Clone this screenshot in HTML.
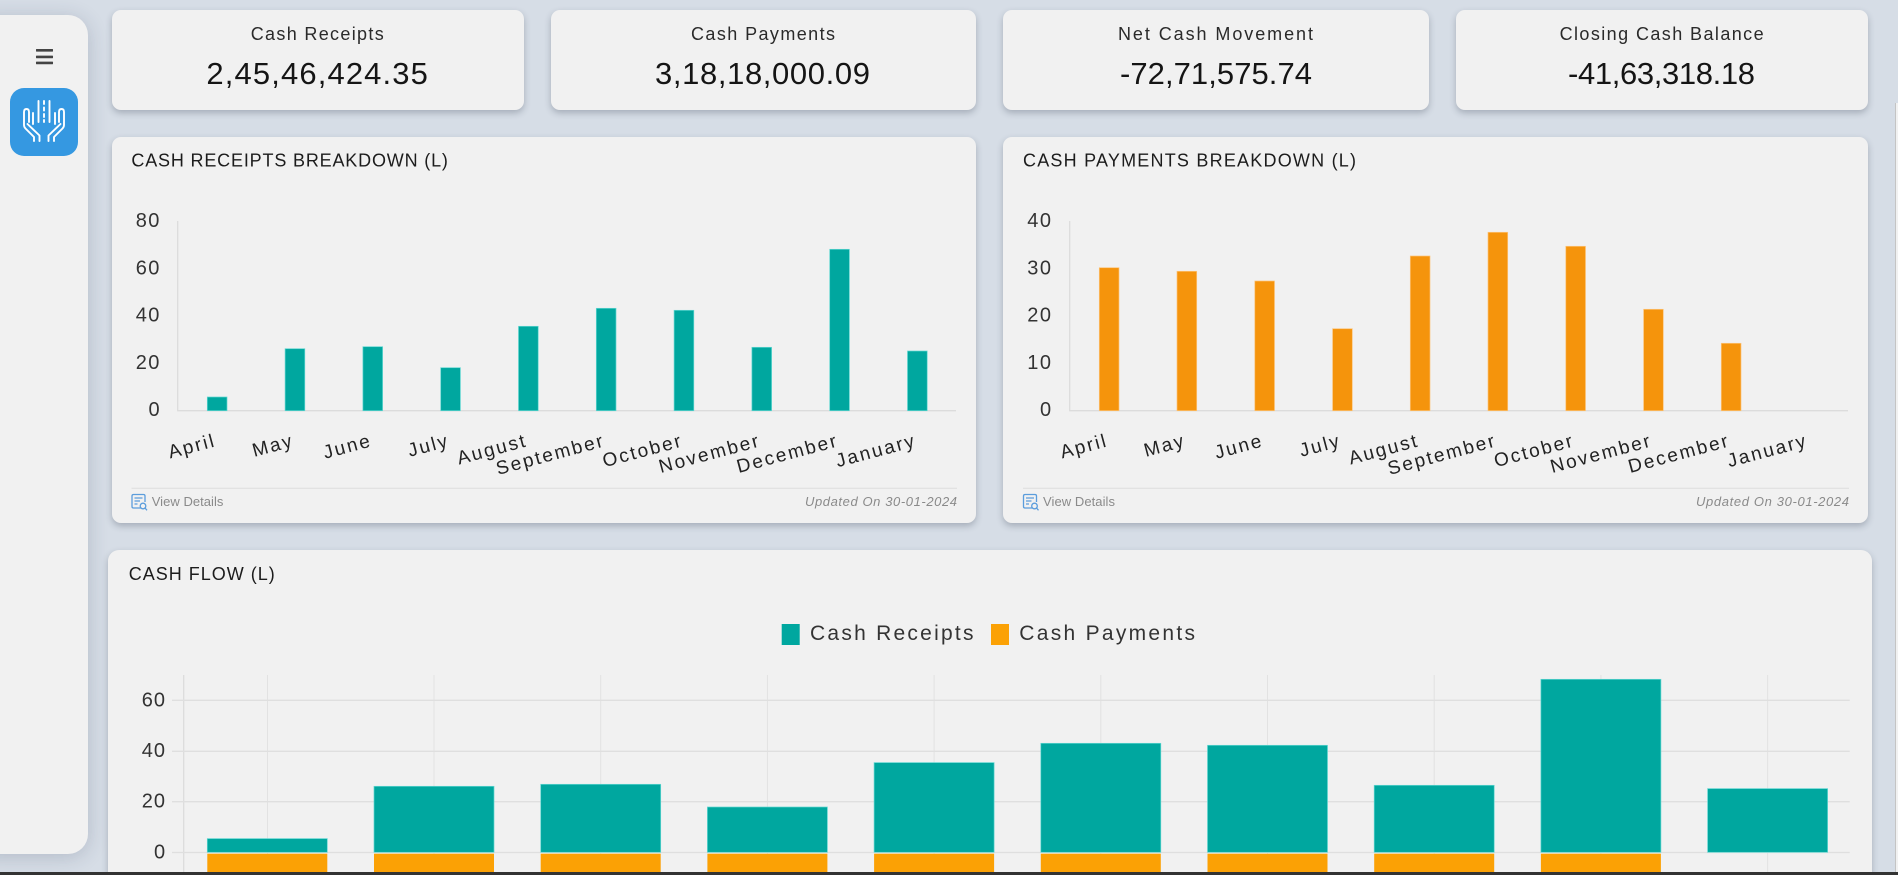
<!DOCTYPE html>
<html><head><meta charset="utf-8"><title>Cash Dashboard</title>
<style>
html,body{margin:0;padding:0;width:1898px;height:875px;overflow:hidden;background:#d6dde6;font-family:"Liberation Sans",sans-serif}
#w{position:relative;width:1898px;height:875px;overflow:hidden;background:#d6dde6}
.c{position:absolute;background:#f1f1f1;border-radius:9px;box-shadow:0 3px 7px rgba(40,50,70,.28)}
svg{position:absolute;left:0;top:0}
text{font-family:"Liberation Sans",sans-serif}
.t{font-size:18px;fill:#2a2a2a}
.v{font-size:31px;fill:#151515}
.h{font-size:18px;fill:#1c1c1c}
.y{font-size:20px;fill:#333}
.l{font-size:19px;fill:#222;letter-spacing:2.1px;text-anchor:end}
.f{font-size:13px;fill:#8a8a8a}
.g{font-size:21px;fill:#333}
.tb{fill:#00a79f;stroke:#62d8d2;stroke-width:.7}
.ob{fill:#f5940c;stroke:#fcc47a;stroke-width:.7}
.ob2{fill:#fba105}
.gl{stroke:#dfdfdf;stroke-width:1.3}
.gv{stroke:#e2e2e2;stroke-width:1}
.ax{stroke:#dcdcdc;stroke-width:1.3}
</style></head>
<body>
<div id="w">
<div class="c" style="left:-30px;top:15px;width:118px;height:839px;border-radius:20px;box-shadow:0 3px 20px rgba(40,50,80,.2)"></div>
<div class="c" style="left:112px;top:10px;width:412px;height:100px"></div>
<div class="c" style="left:551px;top:10px;width:425px;height:100px"></div>
<div class="c" style="left:1003px;top:10px;width:426px;height:100px"></div>
<div class="c" style="left:1456px;top:10px;width:412px;height:100px"></div>
<div class="c" style="left:112px;top:137px;width:864px;height:386px"></div>
<div class="c" style="left:1003px;top:137px;width:865px;height:386px"></div>
<div class="c" style="left:108px;top:550px;width:1764px;height:340px;border-radius:11px"></div>
<div style="position:absolute;left:10px;top:88px;width:68px;height:68px;border-radius:14px;background:#3598e1"></div>

<svg width="1898" height="875" viewBox="0 0 1898 875">
<!-- hamburger -->
<g fill="#444"><rect x="36" y="49" width="17" height="2.6" rx=".5"/><rect x="36" y="55.6" width="17" height="2.6" rx=".5"/><rect x="36" y="61.6" width="17" height="2.6" rx=".5"/></g>
<!-- logo -->
<g fill="none" stroke="#fff" stroke-width="1.9" stroke-linecap="round" stroke-linejoin="round">
<path d="M38.5 101V122M49.5 101V122M44 101v3M44 107.5v3M44 114v3M44 120v2"/>
<path d="M34 141V137L25.5 128.5Q24 127 24 125V112Q24 109 26.5 109Q29 109 29 112V122"/>
<path d="M54 141V137L62.5 128.5Q64 127 64 125V112Q64 109 61.5 109Q59 109 59 112V122"/>
<path d="M33 113V124M55 113V124"/>
<path d="M27.5 124L39.5 135.5V141M60.5 124L48.5 135.5V141"/>
</g>

<!-- KPI cards -->
<text class="t" x="250.7" y="40" textLength="133">Cash Receipts</text>
<text class="v" x="206.4" y="84" textLength="221.5">2,45,46,424.35</text>
<text class="t" x="691" y="40" textLength="144">Cash Payments</text>
<text class="v" x="655" y="84" textLength="215">3,18,18,000.09</text>
<text class="t" x="1118" y="40" textLength="195">Net Cash Movement</text>
<text class="v" x="1120" y="84" textLength="192">-72,71,575.74</text>
<text class="t" x="1559.6" y="40" textLength="204">Closing Cash Balance</text>
<text class="v" x="1568" y="84" textLength="187">-41,63,318.18</text>

<!-- panel titles -->
<text class="h" x="131.4" y="166.7" textLength="316.5">CASH RECEIPTS BREAKDOWN (L)</text>
<text class="h" x="1023" y="166.7" textLength="333">CASH PAYMENTS BREAKDOWN (L)</text>
<text class="h" x="128.7" y="580" textLength="146">CASH FLOW (L)</text>

<!-- chart 1 -->
<path class="ax" d="M177.7 221V410.7H956" fill="none"/>
<text class="y" x="135.7" y="227" textLength="23.7">80</text>
<text class="y" x="135.7" y="274.3" textLength="23.7">60</text>
<text class="y" x="135.7" y="321.6" textLength="23.7">40</text>
<text class="y" x="135.7" y="369" textLength="23.7">20</text>
<text class="y" x="148.5" y="416">0</text>
<rect class="tb" x="207.3" y="397" width="19.7" height="13.7"/>
<rect class="tb" x="285.1" y="348.7" width="19.7" height="62"/>
<rect class="tb" x="362.9" y="346.7" width="19.7" height="64"/>
<rect class="tb" x="440.7" y="367.7" width="19.7" height="43"/>
<rect class="tb" x="518.5" y="326.3" width="19.7" height="84.4"/>
<rect class="tb" x="596.3" y="308.3" width="19.7" height="102.4"/>
<rect class="tb" x="674.1" y="310.3" width="19.7" height="100.4"/>
<rect class="tb" x="751.9" y="347.3" width="19.7" height="63.4"/>
<rect class="tb" x="829.7" y="249.3" width="19.7" height="161.4"/>
<rect class="tb" x="907.5" y="351" width="19.7" height="59.7"/>
<text class="l" x="217" y="446" transform="rotate(-15 217 446)">April</text>
<text class="l" x="295" y="446" transform="rotate(-15 295 446)">May</text>
<text class="l" x="373" y="446" transform="rotate(-15 373 446)">June</text>
<text class="l" x="450.5" y="446" transform="rotate(-15 450.5 446)">July</text>
<text class="l" x="528.3" y="446" transform="rotate(-15 528.3 446)">August</text>
<text class="l" x="606" y="446" transform="rotate(-15 606 446)">September</text>
<text class="l" x="684" y="446" transform="rotate(-15 684 446)">October</text>
<text class="l" x="761.7" y="446" transform="rotate(-15 761.7 446)">November</text>
<text class="l" x="839.5" y="446" transform="rotate(-15 839.5 446)">December</text>
<text class="l" x="917.3" y="446" transform="rotate(-15 917.3 446)">January</text>
<path d="M131.5 488.3H957" stroke="#dedede" stroke-width="1"/>
<g fill="none" stroke="#5b9ddc" stroke-width="1.3">
<path d="M141 508H133.5Q132 508 132 506.5V496Q132 494.5 133.5 494.5H143.5Q145 494.5 145 496V502"/>
<path d="M134.5 498H142.5M134.5 501H140M134.5 504H137.5"/><circle cx="143" cy="506" r="2.8"/><path d="M145 508L147 510.3"/>
</g>
<text class="f" x="151.7" y="506" textLength="71.7">View Details</text>
<text class="f" x="805" y="506" textLength="152" font-style="italic">Updated On 30-01-2024</text>

<!-- chart 2 -->
<path class="ax" d="M1069.7 221V410.7H1848" fill="none"/>
<text class="y" x="1027.3" y="227" textLength="23.7">40</text>
<text class="y" x="1027.3" y="274.3" textLength="23.7">30</text>
<text class="y" x="1027.3" y="321.6" textLength="23.7">20</text>
<text class="y" x="1027.3" y="369" textLength="23.7">10</text>
<text class="y" x="1040" y="416">0</text>
<rect class="ob" x="1099.3" y="267.7" width="19.7" height="143"/>
<rect class="ob" x="1177" y="271.3" width="19.7" height="139.4"/>
<rect class="ob" x="1254.8" y="281" width="19.7" height="129.7"/>
<rect class="ob" x="1332.6" y="328.7" width="19.7" height="82"/>
<rect class="ob" x="1410.3" y="256" width="19.7" height="154.7"/>
<rect class="ob" x="1488" y="232.3" width="19.7" height="178.4"/>
<rect class="ob" x="1565.8" y="246.3" width="19.7" height="164.4"/>
<rect class="ob" x="1643.6" y="309.3" width="19.7" height="101.4"/>
<rect class="ob" x="1721.3" y="343.3" width="19.7" height="67.4"/>
<text class="l" x="1109" y="446" transform="rotate(-15 1109 446)">April</text>
<text class="l" x="1186.7" y="446" transform="rotate(-15 1186.7 446)">May</text>
<text class="l" x="1264.5" y="446" transform="rotate(-15 1264.5 446)">June</text>
<text class="l" x="1342.2" y="446" transform="rotate(-15 1342.2 446)">July</text>
<text class="l" x="1420" y="446" transform="rotate(-15 1420 446)">August</text>
<text class="l" x="1497.7" y="446" transform="rotate(-15 1497.7 446)">September</text>
<text class="l" x="1575.5" y="446" transform="rotate(-15 1575.5 446)">October</text>
<text class="l" x="1653.2" y="446" transform="rotate(-15 1653.2 446)">November</text>
<text class="l" x="1731" y="446" transform="rotate(-15 1731 446)">December</text>
<text class="l" x="1808.7" y="446" transform="rotate(-15 1808.7 446)">January</text>
<path d="M1023 488.3H1849" stroke="#dedede" stroke-width="1"/>
<g fill="none" stroke="#5b9ddc" stroke-width="1.3" transform="translate(891.5 0)">
<path d="M141 508H133.5Q132 508 132 506.5V496Q132 494.5 133.5 494.5H143.5Q145 494.5 145 496V502"/>
<path d="M134.5 498H142.5M134.5 501H140M134.5 504H137.5"/><circle cx="143" cy="506" r="2.8"/><path d="M145 508L147 510.3"/>
</g>
<text class="f" x="1043" y="506" textLength="72">View Details</text>
<text class="f" x="1696" y="506" textLength="153" font-style="italic">Updated On 30-01-2024</text>

<!-- cash flow -->
<rect x="781.7" y="624" width="18" height="21" fill="#00a79f"/>
<text class="g" x="810" y="640" textLength="163.5">Cash Receipts</text>
<rect x="991" y="624" width="18" height="21" fill="#fba105"/>
<text class="g" x="1019.3" y="640" textLength="175.7">Cash Payments</text>
<path class="gv" d="M267.5 675V872M434 675V872M600.7 675V872M767.4 675V872M934.1 675V872M1100.8 675V872M1267.5 675V872M1434.2 675V872M1600.9 675V872M1767.6 675V872"/>
<path class="ax" d="M183.7 675V872"/>
<path class="gl" d="M172 700.3H1849.7M172 751.3H1849.7M172 801.7H1849.7M172 852.5H1849.7"/>
<text class="y" x="141.7" y="706.5" textLength="23.3">60</text>
<text class="y" x="141.7" y="757" textLength="23.3">40</text>
<text class="y" x="141.7" y="807.3" textLength="23.3">20</text>
<text class="y" x="154" y="858.3">0</text>
<rect class="tb" x="207.3" y="838.6" width="120" height="13.7"/>
<rect class="tb" x="374" y="786.3" width="120" height="66"/>
<rect class="tb" x="540.7" y="784.3" width="120" height="68"/>
<rect class="tb" x="707.4" y="807" width="120" height="45.3"/>
<rect class="tb" x="874.1" y="762.6" width="120" height="89.7"/>
<rect class="tb" x="1040.8" y="743.3" width="120" height="109"/>
<rect class="tb" x="1207.5" y="745.3" width="120" height="107"/>
<rect class="tb" x="1374.2" y="785.3" width="120" height="67"/>
<rect class="tb" x="1540.9" y="679.3" width="120" height="173"/>
<rect class="tb" x="1707.6" y="788.6" width="120" height="63.7"/>
<g class="ob2">
<rect x="207.3" y="853.7" width="120" height="19"/><rect x="374" y="853.7" width="120" height="19"/>
<rect x="540.7" y="853.7" width="120" height="19"/><rect x="707.4" y="853.7" width="120" height="19"/>
<rect x="874.1" y="853.7" width="120" height="19"/><rect x="1040.8" y="853.7" width="120" height="19"/>
<rect x="1207.5" y="853.7" width="120" height="19"/><rect x="1374.2" y="853.7" width="120" height="19"/>
<rect x="1540.9" y="853.7" width="120" height="19"/>
</g>
<!-- scrollbar edge & bottom strip -->
<rect x="1895" y="103" width="1" height="769" fill="#c4c4c4"/>
<rect x="1896" y="103" width="2" height="769" fill="#f1f1f1"/>
<rect x="0" y="872" width="1898" height="3" fill="#333"/>
</svg>
</div>
</body></html>
